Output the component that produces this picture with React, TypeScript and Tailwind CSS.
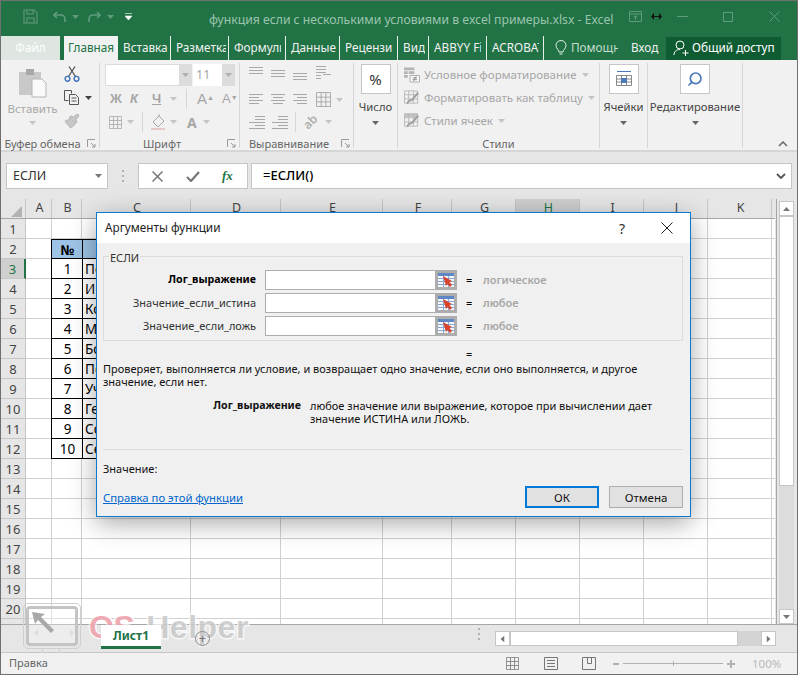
import { Paintbrush, Search } from "lucide-react";

const cols: [string, number][] = [
  ["A", 26], ["B", 30], ["C", 109], ["D", 90], ["E", 102], ["F", 69],
  ["G", 64], ["H", 64], ["I", 64], ["J", 64], ["K", 64],
];
const names = ["", "", "По", "И", "Ко", "М", "Бо", "По", "Уч", "Ге", "Со", "Се"];
const rows = Array.from({ length: 21 }, (_, i) => i + 1);

function Caret({ className = "" }: { className?: string }) {
  return (
    <svg width="7" height="4" viewBox="0 0 7 4" className={className}>
      <path d="M0 0h7L3.5 4z" fill="currentColor" />
    </svg>
  );
}

// horizontal strokes of the alignment buttons
function Lines({ segs, w = 15, h = 15 }: { segs: [number, number, number][]; w?: number; h?: number }) {
  return (
    <svg width={w} height={h} viewBox={`0 0 ${w} ${h}`} className="text-[#a8a8a8]">
      {segs.map(([a, b, y], i) => (
        <path key={i} d={`M${a} ${y + 0.5}H${b}`} stroke="currentColor" />
      ))}
    </svg>
  );
}

function Launcher() {
  return (
    <svg width="9" height="9" viewBox="0 0 9 9" className="absolute right-[3px] bottom-0 text-[#9a9a9a]">
      <path d="M0.5 8V0.5H8M4 4l4 4M8 5v3H5" stroke="currentColor" fill="none" />
    </svg>
  );
}

function GroupLabel({ children, launcher }: { children: string; launcher?: boolean }) {
  return <div className={`absolute bottom-[-5px] left-0 right-0 h-[17px] whitespace-nowrap text-center text-[11px] leading-[15px] text-[#666] ${launcher ? "pr-[15px]" : ""}`}>{children}</div>;
}

function CollapsedGroup({ label, width, icon }: { label: string; width: number; icon: React.ReactNode }) {
  return (
    <div style={{ width }} className="flex h-[85px] shrink-0 flex-col items-center border-r border-[#d6d6d6] pt-px">
      <div className="flex h-[30px] w-[30px] shrink-0 items-center justify-center border border-[#c6c6c6] bg-white">{icon}</div>
      <div className="mt-[4px] whitespace-nowrap text-[11.25px] leading-[17px] text-[#444]">{label}</div>
      <Caret className="mt-[6px] text-[#666]" />
    </div>
  );
}

function TabSep() {
  return <div className="h-[24px] w-px shrink-0 bg-[#e8f0eb]" />;
}

function Tab({ label, width, pr = "pr-[2px]" }: { label: string; width: number; pr?: string }) {
  return (
    <>
      <div style={{ width }} className={`flex h-[24px] shrink-0 items-center pl-[5px] text-[11.75px] text-[#f1f1f1] ${pr}`}>
        <div className="overflow-hidden whitespace-nowrap">{label}</div>
      </div>
      <TabSep />
    </>
  );
}

function StyleRow({ label, icon }: { label: string; icon: React.ReactNode }) {
  return (
    <div className="flex h-[23px] items-center gap-[4px] whitespace-nowrap text-[11.5px] text-[#a6a6a6]">
      <span className="flex w-[16px] justify-center">{icon}</span>
      <span>{label}</span>
      <Caret className="ml-[1px] text-[#c4c4c4]" />
    </div>
  );
}

function GridIcon({ size = 16, stroke = "#a8a8a8" }: { size?: number; stroke?: string }) {
  return (
    <svg width={size} height={size} viewBox="0 0 16 16" fill="none" stroke={stroke}>
      <path d="M.5.5h15v15H.5zM.5 5.5h15M.5 10.5h15M5.5.5v15M10.5.5v15" />
    </svg>
  );
}

function CondIcon() {
  return (
    <svg width="17" height="16" viewBox="0 0 17 16" fill="none">
      <path d="M0 0h11v3H0zM0 4h4v3H0zM5 4h6v3H5zM0 8h4v3H0z" fill="#b4b4b4" />
      <path d="M6.500 8.500h10v7h-10z" fill="#fff" stroke="#a8a8a8" />
      <path d="M9 11h5M9 13h5M10 14.500l3-5" stroke="#8a8a8a" />
    </svg>
  );
}

function BrushGridIcon({ head }: { head?: boolean }) {
  return (
    <svg width="17" height="16" viewBox="0 0 17 16" fill="none">
      {head && <path d="M0 0h15v4H0z" fill="#c4c4c4" />}
      <path d="M.5.5h14v13H.5zM.5 4.500h14M.5 9h14M5 .5v13M10 .5v13" stroke="#b8b8b8" />
      <path d="M16 3L9 11l-3 1-3 3c-.5-2 .5-4 2-5l3-1 6-7z" fill="#a0a0a0" />
    </svg>
  );
}

function RefButton() {
  return (
    <div className="flex h-full w-[22px] shrink-0 items-center justify-center border-[3px] border-[#adadad] bg-[#e4e4e4]">
      <svg width="16" height="14" viewBox="0 0 16 14">
        <path d="M0 0h16v14H0z" fill="#f4f7fb" />
        <path d="M0 0h16v3H0z" fill="#5f87c6" />
        <path d="M0 5.500h16M0 8.500h16M0 11.500h16M5.500 3v11M10.500 3v11" stroke="#8aa7d4" strokeWidth="1" />
        <path d="M5 3l9 5-2.500 1L14 12l-2 2-2.500-3L8 13z" fill="#d8432b" />
      </svg>
    </div>
  );
}

function ArgRow({ label, type, bold, mt = "" }: { label: string; type: string; bold?: boolean; mt?: string }) {
  return (
    <div className={`flex h-[20px] items-center ${mt}`}>
      <div className={`w-[143px] shrink-0 whitespace-nowrap pb-[2px] text-right ${bold ? "text-[10.65px] font-bold text-black" : "text-[11px] text-[#333]"}`}>{label}</div>
      <div className="ml-[9px] flex h-full w-[192px] shrink-0">
        <div className="h-full flex-1 border border-r-0 border-[#adadad] bg-white" />
        <RefButton />
      </div>
      <div className="ml-[9px] w-[17px] shrink-0 pb-[2px] text-[11px] text-black">=</div>
      <div className="pb-[2px] text-[11px] font-semibold text-[#a6a6a6]">{type}</div>
    </div>
  );
}

function Dialog() {
  return (
    <div className="absolute left-[95px] top-[211px] z-10 flex h-[305px] w-[595px] flex-col border border-[#0a7ad1] bg-[#f0f0f0] shadow-[0_6px_24px_rgba(0,0,0,0.35)]">
      <div className="flex h-[30px] shrink-0 items-center bg-white pl-[8px] text-[11.75px] text-[#222]">
        <span>Аргументы функции</span>
        <span className="ml-auto mr-[36px] text-[14px] text-[#333]">?</span>
        <svg width="12" height="12" viewBox="0 0 12 12" className="mr-[17px]">
          <path d="M.5.5l11 11M11.500.5l-11 11" stroke="#222" fill="none" />
        </svg>
      </div>
      <div className="flex flex-1 flex-col pl-[6px] pr-[7px] text-[11px] leading-[13px] text-[#111]">
        <div className="relative mt-[13px] h-[85px] shrink-0 border border-[#dcdcdc] pl-[9px] pt-[13px]">
          <span className="absolute left-[5px] top-[-6px] bg-[#f0f0f0] px-[1px] text-[#333]">ЕСЛИ</span>
          <ArgRow label="Лог_выражение" type="логическое" bold />
          <ArgRow label="Значение_если_истина" type="любое" mt="mt-[3px]" />
          <ArgRow label="Значение_если_ложь" type="любое" mt="mt-[3px]" />
        </div>
        <div className="mt-[6px] pl-[363px] leading-[13px]">=</div>
        <p className="mt-[2px] w-[560px]">Проверяет, выполняется ли условие, и возвращает одно значение, если оно выполняется, и другое значение, если нет.</p>
        <div className="mt-[11px] flex">
          <div className="w-[198px] shrink-0 text-right text-[10.65px] font-bold">Лог_выражение</div>
          <p className="ml-[9px] w-[365px]">любое значение или выражение, которое при вычислении дает значение ИСТИНА или ЛОЖЬ.</p>
        </div>
        <div className="mt-[24px] h-px shrink-0 bg-[#dcdcdc]" />
        <div className="mt-[12px]">Значение:</div>
        <div className="mt-[11px] flex items-start justify-between">
          <span className="mt-[5px] text-[11.3px] text-[#0066cc] underline">Справка по этой функции</span>
          <div className="flex gap-[10px] text-[11.5px]">
            <div className="flex h-[22px] w-[74px] items-center justify-center border-2 border-[#0078d7] bg-[#e1e1e1]">ОК</div>
            <div className="flex h-[22px] w-[74px] items-center justify-center border border-[#adadad] bg-[#e1e1e1]">Отмена</div>
          </div>
        </div>
      </div>
    </div>
  );
}

function Sheet() {
  return (
    <div className="flex h-[429px] shrink-0 overflow-hidden bg-[#e6e6e6] pt-[4px]">
      <div className="w-[774px] shrink-0 overflow-hidden">
        <div className="flex h-[20px] border-b border-[#a6a6a6]">
          <div className="flex w-[25px] shrink-0 items-end justify-end border-r border-[#c6c6c6] pb-[1px] pr-[3px]">
            <svg width="11" height="11" viewBox="0 0 11 11"><path d="M11 0v11H0z" fill="#b2b2b2" /></svg>
          </div>
          {cols.map(([c, w]) => (
            <div key={c} style={{ width: w }} className={`flex shrink-0 items-center justify-center border-r border-[#c6c6c6] pl-[2px] text-[12.5px] ${c === "H" ? "bg-[#cfcfcf] text-[#217346]" : "text-[#444]"}`}>{c}</div>
          ))}
        </div>
        {rows.map((r) => (
          <div key={r} className="flex h-[20px]">
            <div className={`flex w-[25px] shrink-0 items-center justify-center border-b border-r border-[#c6c6c6] pt-[2px] text-[13px] ${r === 3 ? "border-r-2 border-r-[#217346] bg-[#cfcfcf] text-[#217346]" : "text-[#444]"}`}>{r}</div>
            {cols.map(([c, w]) => {
              const inTable = r >= 2 && r <= 12;
              if (inTable && c === "B") {
                return (
                  <div key={c} style={{ width: w + 1 }} className={`ml-[-1px] flex shrink-0 items-center justify-center border-b border-l border-black pl-[1px] pt-[2px] text-[13.5px] text-black ${r === 2 ? "border-t bg-[#9dc3e6] font-bold" : "bg-white"}`}>
                    {r === 2 ? "№" : r - 2}
                  </div>
                );
              }
              if (inTable && c === "C") {
                return (
                  <div key={c} style={{ width: w }} className={`flex shrink-0 items-center overflow-hidden whitespace-nowrap border-b border-l border-r border-black pl-[2px] pt-[2px] text-[13.5px] text-black ${r === 2 ? "border-t bg-[#9dc3e6]" : "bg-white"}`}>{names[r - 1]}</div>
                );
              }
              return <div key={c} style={{ width: w }} className="shrink-0 border-b border-r border-[#d0d0d0] bg-white" />;
            })}
            <div className="flex-1 border-b border-[#d0d0d0] bg-white" />
          </div>
        ))}
      </div>
      <div className="ml-[1px] w-px shrink-0 bg-[#a6a6a6]" />
      <div className="ml-[2px] flex w-[15px] shrink-0 flex-col pt-[2px]">
        <div className="flex h-[15px] shrink-0 items-center justify-center border border-[#c6c6c6] bg-white text-[#777]">
          <Caret className="rotate-180" />
        </div>
        <div className="h-[270px] shrink-0 border border-[#c6c6c6] bg-white" />
        <div className="flex-1 bg-[#dcdcdc]" />
        <div className="flex h-[15px] shrink-0 items-center justify-center border border-[#c6c6c6] bg-white text-[#777]">
          <Caret />
        </div>
      </div>
    </div>
  );
}

function Watermark() {
  return (
    <div className="pointer-events-none absolute left-[22px] top-[602px] z-20 flex items-start">
      <div className="relative h-[46px] w-[58px] rounded-[5px] border border-[#cfcfcf] p-[2px]">
        <div className="relative h-full w-full rounded-[4px] border-[3px] border-[#c4c4c4] bg-white/30">
          <svg width="32" height="26" viewBox="0 0 32 26" className="absolute left-0 top-0">
            <path d="M3 3l13 2-4 3 13 13-3 3L9 11l-3 4z" fill="#a8a8a8" />
          </svg>
          <svg width="40" height="8" viewBox="0 0 40 8" className="absolute bottom-[6px] left-[5px]">
            <path d="M4 0v8L0 4zM36 0v8l4-4z" fill="#dedede" />
          </svg>
        </div>
        <div className="absolute bottom-[-5px] left-[18px] h-[5px] w-[18px] rounded-t-[2px] border border-b-0 border-[#cfcfcf]" />
      </div>
      <span className="ml-[8px] mt-[8px] font-['Liberation_Sans',sans-serif] text-[32px] font-bold leading-[32px] tracking-[-0.5px] text-[#eda0aa]/90 [-webkit-text-stroke:3px_rgba(255,255,255,0.7)] [paint-order:stroke]">OS</span>
      <span className="ml-[12px] mt-[8px] font-['Liberation_Sans',sans-serif] text-[32px] font-bold leading-[32px] tracking-[0.5px] text-[#c4c4c4]/80 [-webkit-text-stroke:3px_rgba(255,255,255,0.7)] [paint-order:stroke]">Helper</span>
    </div>
  );
}

export default function App() {
  return (
    <div className="relative flex h-[675px] w-[798px] flex-col overflow-hidden border border-[#707070] bg-[#f1f1f1] font-['Noto_Sans',sans-serif]">
      {/* title bar */}
      <div className="flex h-[35px] shrink-0 items-center bg-[#217346] pb-[4px] text-[#5f9c7d]">
        <svg width="15" height="15" viewBox="0 0 15 15" className="ml-[22px]" fill="none" stroke="#4f8f6e" strokeWidth="1.500">
          <path d="M1 1h10l3 3v10H1zM4 1v4h6V1M4 14V9h7v5" />
        </svg>
        <svg width="14" height="12" viewBox="0 0 14 12" className="ml-[15px]" fill="none" stroke="#5f9c7d" strokeWidth="1.600">
          <path d="M4 1L1 4l3 3M1 4h7a4 4 0 0 1 4 4v3" />
        </svg>
        <Caret className="ml-[5px]" />
        <svg width="14" height="12" viewBox="0 0 14 12" className="ml-[8px]" fill="none" stroke="#5f9c7d" strokeWidth="1.600">
          <path d="M10 1l3 3-3 3M13 4H6a4 4 0 0 0-4 4v3" />
        </svg>
        <Caret className="ml-[6px]" />
        <svg width="7" height="7" viewBox="0 0 7 7" className="ml-[11px] text-white">
          <path d="M0 .5h7M0 3h7L3.500 7z" stroke="currentColor" strokeWidth=".6" fill="currentColor" />
        </svg>
        <div className="ml-[77px] w-[413px] whitespace-nowrap pt-[7px] text-[12.2px] text-[#9cc4ad]">функция если с несколькими условиями в excel примеры.xlsx - Excel</div>
        <svg width="13" height="11" viewBox="0 0 13 11" className="ml-[7px]" fill="none" stroke="#5f9c7d">
          <path d="M.5.500h12v10H.5zM.5 3h12M6.500 9V5M4.500 6.500l2-2 2 2" />
        </svg>
        <svg width="11" height="7" viewBox="0 0 11 7" className="ml-[9px]">
          <path d="M3 0v7L0 3.500zM8 0v7l3-3.500zM3 3h5v1H3z" fill="#111" />
        </svg>
        <div className="ml-[15px] h-px w-[11px] bg-[#5f9c7d]" />
        <div className="ml-[35px] h-[10px] w-[10px] border border-[#5f9c7d]" />
        <svg width="11" height="11" viewBox="0 0 11 11" className="ml-[36px]" fill="none" stroke="#5f9c7d">
          <path d="M.5.500l10 10M10.500.500l-10 10" />
        </svg>
      </div>
      {/* tabs */}
      <div className="flex h-[24px] shrink-0 items-center bg-[#217346]">
        <div className="flex h-[24px] w-[59px] shrink-0 items-center justify-center bg-[#dfe6e1] text-[11.75px] text-white">Файл</div>
        <div className="ml-[4px] flex h-[24px] w-[54px] shrink-0 items-center justify-center bg-[#f1f1f1] text-[11.75px] text-[#217346]">Главная</div>
        <Tab label="Вставка" width={52} />
        <Tab label="Разметка" width={57} />
        <Tab label="Формулы" width={56} pr="pr-[4px]" />
        <Tab label="Данные" width={53} />
        <Tab label="Рецензирование" width={57} pr="pr-[4px]" />
        <Tab label="Вид" width={30} />
        <Tab label="ABBYY FineReader" width={57} pr="pr-[5px]" />
        <Tab label="ACROBAT" width={56} pr="pr-[4px]" />
        <svg width="12" height="16" viewBox="0 0 12 16" className="ml-[11px] shrink-0" fill="none" stroke="#e8f0eb">
          <path d="M4 12c0-2-3-3.500-3-6.500a5 5 0 0 1 10 0C11 8.500 8 10 8 12zM4.500 14h3" />
        </svg>
        <div className="ml-[4px] w-[47px] shrink-0 overflow-hidden whitespace-nowrap text-[11.75px] text-[#c5dccd]">Помощник</div>
        <div className="ml-[13px] w-[25px] shrink-0 whitespace-nowrap text-[11.75px] text-[#f1f1f1]">Вход</div>
        <div className="ml-[10px] flex h-[23px] w-[115px] shrink-0 items-center gap-[3px] whitespace-nowrap bg-[#0f5c33] pl-[7px] text-[11.75px] text-white">
          <svg width="16" height="16" viewBox="0 0 16 16" fill="none" stroke="#fff">
            <circle cx="7" cy="5" r="4" />
            <path d="M1 15c0-3 2-5.500 6-5.500M9.500 13h6M12.500 10v6" />
          </svg>
          Общий доступ
        </div>
      </div>
      {/* ribbon */}
      <div className="flex h-[92px] shrink-0 items-start border-b-2 border-[#d6d6d6] bg-[#f1f1f1] pt-[3px]">
        <div className="relative h-[85px] w-[99px] shrink-0 border-r border-[#d6d6d6]">
          <div className="flex h-[67px]">
            <div className="flex w-[63px] flex-col items-center pt-[5px] text-[#a6a6a6]">
              <svg width="30" height="30" viewBox="0 0 30 30">
                <path d="M1 4h22v23H1z" fill="#c9c9c9" />
                <path d="M8 1h8v6H8z" fill="#a8a8a8" />
                <path d="M14 11h10l4 4v14H14z" fill="#fafafa" stroke="#b4b4b4" />
              </svg>
              <div className="mt-[2px] text-[11.5px] leading-[17px]">Вставить</div>
              <Caret className="mt-[4px] text-[#c4c4c4]" />
            </div>
            <div className="flex flex-col items-start gap-[8px] pt-[3px]">
              <svg width="16" height="16" viewBox="0 0 16 16" fill="none">
                <path d="M4.500 10.500L11 .5M11.500 10.500L5 .5" stroke="#555" strokeWidth="1.300" />
                <circle cx="3.500" cy="12.800" r="2.400" stroke="#3f74b8" strokeWidth="1.400" />
                <circle cx="12.500" cy="12.800" r="2.400" stroke="#3f74b8" strokeWidth="1.400" />
              </svg>
              <div className="flex items-center gap-[5px]">
                <svg width="16" height="15" viewBox="0 0 16 15" fill="none" stroke="#555">
                  <path d="M.5.500h7v3M.5.500v10h4M5.500 4.500h6l3 3v7h-9zM7.500 8h5M7.500 11h5" />
                </svg>
                <Caret className="text-[#444]" />
              </div>
              <Paintbrush size={16} className="text-[#bdbdbd]" fill="#c8c8c8" />
            </div>
          </div>
          <GroupLabel launcher>Буфер обмена</GroupLabel>
          <Launcher />
        </div>
        <div className="relative h-[85px] w-[140px] shrink-0 border-r border-[#d6d6d6] pl-[5px] pt-[1px] text-[#a6a6a6]">
          <div className="flex h-[22px]">
            <div className="flex w-[87px] items-center justify-end border border-r-0 border-[#dcdcdc] bg-white">
              <div className="flex h-full w-[13px] items-center justify-center bg-[#dcdcdc]"><Caret className="text-[#b0b0b0]" /></div>
            </div>
            <div className="ml-px flex w-[42px] items-center justify-between bg-white pl-[3px] text-[12.5px]">
              11
              <div className="flex h-full w-[13px] items-center justify-center bg-[#dcdcdc]"><Caret className="text-[#b0b0b0]" /></div>
            </div>
          </div>
          <div className="mt-[3px] flex h-[20px] items-center font-['Liberation_Sans',sans-serif] text-[13px] font-bold">
            <span className="ml-[5px] w-[20px]">Ж</span>
            <span className="w-[20px] italic">К</span>
            <span className="ml-[2px] w-[16px] underline">Ч</span>
            <Caret className="ml-[2px] text-[#c4c4c4]" />
            <div className="ml-[9px] h-[20px] w-px bg-[#d6d6d6]" />
            <span className="ml-[10px] w-[25px] text-[15px] font-normal">A<sup className="text-[7px]">▲</sup></span>
            <span className="text-[13px] font-normal">A<sup className="text-[7px]">▼</sup></span>
          </div>
          <div className="mt-[3px] flex h-[20px] items-center">
            <span className="ml-[4px]"><GridIcon size={13} /></span>
            <Caret className="ml-[5px] text-[#c4c4c4]" />
            <div className="ml-[8px] h-[20px] w-px bg-[#d6d6d6]" />
            <svg width="16" height="16" viewBox="0 0 16 16" className="ml-[8px]" fill="none" stroke="#a8a8a8">
              <path d="M2 8l6-6 5 5-6 6zM8 2V0" />
              <path d="M0 14h14v2H0z" fill="#e6c8c8" stroke="none" />
            </svg>
            <Caret className="ml-[3px] text-[#c4c4c4]" />
            <span className="ml-[10px] text-[14px] font-bold">A</span>
            <Caret className="ml-[6px] text-[#c4c4c4]" />
          </div>
          <GroupLabel launcher>Шрифт</GroupLabel>
          <Launcher />
        </div>
        <div className="relative h-[85px] w-[114px] shrink-0 border-r border-[#d6d6d6] pl-[9px] pt-[2px]">
          <div className="flex h-[23px] items-start gap-[7px]">
            <Lines segs={[[0, 14, 2], [0, 14, 5], [0, 14, 8]]} />
            <Lines segs={[[0, 14, 5], [0, 14, 8], [0, 14, 11]]} />
            <Lines segs={[[0, 14, 8], [0, 14, 11], [0, 14, 14]]} />
            <Lines w={18} h={16} segs={[[1, 11, 1], [1, 11, 4], [1, 11, 7], [1, 6, 10], [1, 6, 13], [8, 16, 9]]} />
          </div>
          <div className="flex h-[23px] items-center gap-[7px]">
            <Lines segs={[[0, 14, 2], [0, 10, 5], [0, 14, 8], [0, 10, 11]]} />
            <Lines segs={[[0, 14, 2], [2, 12, 5], [0, 14, 8], [2, 12, 11]]} />
            <Lines segs={[[0, 14, 2], [4, 14, 5], [0, 14, 8], [4, 14, 11]]} />
            <span className="ml-[1px]"><GridIcon size={15} /></span>
            <Caret className="ml-[-2px] text-[#c4c4c4]" />
          </div>
          <div className="flex h-[22px] items-center gap-[7px]">
            <Lines w={16} segs={[[6, 16, 1], [6, 16, 4], [0, 16, 7], [6, 16, 10], [0, 16, 13]]} />
            <Lines w={16} segs={[[6, 16, 1], [6, 16, 4], [0, 16, 7], [6, 16, 10], [0, 16, 13]]} />
            <div className="h-[20px] w-px bg-[#d6d6d6]" />
            <span className="-rotate-45 text-[12px] font-semibold text-[#b0b0b0]">ab</span>
            <Caret className="text-[#c4c4c4]" />
          </div>
          <GroupLabel launcher>Выравнивание</GroupLabel>
          <Launcher />
        </div>
        <CollapsedGroup label="Число" width={44} icon={<span className="text-[15px] text-[#333]">%</span>} />
        <div className="relative h-[85px] w-[202px] shrink-0 border-r border-[#d6d6d6] pl-[6px]">
          <StyleRow label="Условное форматирование" icon={<CondIcon />} />
          <StyleRow label="Форматировать как таблицу" icon={<BrushGridIcon />} />
          <StyleRow label="Стили ячеек" icon={<BrushGridIcon head />} />
          <GroupLabel>Стили</GroupLabel>
        </div>
        <CollapsedGroup
          label="Ячейки"
          width={48}
          icon={
            <svg width="16" height="17" viewBox="0 0 16 17" fill="none">
              <path d="M1 .5h14" stroke="#4a78b8" />
              <path d="M.5 4.500h15v10H.5zM.5 8h15M.5 11h15M5.500 4.500v10M10.500 4.500v10" stroke="#888" />
              <path d="M5 7h6v5H5z" fill="#4a78b8" />
            </svg>
          }
        />
        <CollapsedGroup label="Редактирование" width={95} icon={<Search size={16} strokeWidth={2.500} className="-scale-x-100 text-[#4a78b8]" />} />
        <div className="flex h-[85px] flex-1 items-end justify-end pb-[1px] pr-[9px]">
          <svg width="10" height="6" viewBox="0 0 10 6" fill="none" stroke="#666" strokeWidth="1.500">
            <path d="M1 5l4-4 4 4" />
          </svg>
        </div>
      </div>
      {/* formula bar */}
      <div className="flex h-[43px] shrink-0 items-start bg-[#e6e6e6] pl-[5px] pt-[11px]">
        <div className="flex h-[26px] w-[102px] items-center justify-between border border-[#c6c6c6] bg-white pl-[6px] pr-[5px] text-[12.5px] text-[#333]">
          ЕСЛИ
          <Caret className="text-[#777]" />
        </div>
        <div className="ml-[14px] flex h-[26px] flex-col items-center justify-center gap-[3px]">
          <div className="h-[2px] w-[2px] bg-[#b0b0b0]" />
          <div className="h-[2px] w-[2px] bg-[#b0b0b0]" />
          <div className="h-[2px] w-[2px] bg-[#b0b0b0]" />
        </div>
        <div className="ml-[14px] flex h-[26px] w-[110px] items-center border border-[#c6c6c6] bg-white text-[#777]">
          <svg width="11" height="11" viewBox="0 0 11 11" className="ml-[13px]" fill="none" stroke="currentColor" strokeWidth="1.500">
            <path d="M.5.500l10 10M10.500.500l-10 10" />
          </svg>
          <svg width="14" height="11" viewBox="0 0 14 11" className="ml-[23px]" fill="none" stroke="currentColor" strokeWidth="2.200">
            <path d="M1 6l4 4 8-9" />
          </svg>
          <span className="ml-[22px] font-['Liberation_Serif',serif] text-[13px] font-bold italic text-[#217346]">fx</span>
        </div>
        <div className="ml-[3px] flex h-[26px] w-[541px] items-center justify-between border border-[#c6c6c6] bg-white pl-[11px] pr-[5px] text-[13px] font-medium text-black">
          =ЕСЛИ()
          <svg width="10" height="6" viewBox="0 0 10 6" fill="none" stroke="#555" strokeWidth="1.800">
            <path d="M1 1l4 4 4-4" />
          </svg>
        </div>
      </div>
      <Sheet />
      {/* sheet tabs */}
      <div className="flex h-[28px] shrink-0 items-start border-t border-[#a6a6a6] bg-[#e6e6e6]">
        <div className="relative z-30 ml-[100px] flex h-[24px] w-[60px] items-center justify-center border-b-[3px] border-[#217346] bg-white text-[12px] font-bold text-[#217346]">Лист1</div>
        <div className="relative z-30 ml-[34px] mt-[6px] flex h-[15px] w-[15px] items-center justify-center rounded-full border border-[#8a8a8a] text-[13px] leading-none text-[#777]">+</div>
        <div className="ml-[268px] mt-[3px] flex flex-col gap-[3px]">
          <div className="h-[2px] w-[2px] bg-[#b0b0b0]" />
          <div className="h-[2px] w-[2px] bg-[#b0b0b0]" />
          <div className="h-[2px] w-[2px] bg-[#b0b0b0]" />
        </div>
        <div className="ml-[15px] mt-[6px] flex h-[15px] w-[281px] bg-[#d4d4d4]">
          <div className="flex w-[15px] items-center justify-center border border-[#c6c6c6] bg-white text-[#777]"><Caret className="rotate-90" /></div>
          <div className="w-[228px] border border-[#c6c6c6] bg-white" />
          <div className="flex-1" />
          <div className="flex w-[15px] items-center justify-center border border-[#c6c6c6] bg-white text-[#777]"><Caret className="-rotate-90" /></div>
        </div>
      </div>
      {/* status bar */}
      <div className="flex flex-1 items-center border-t border-[#c6c6c6] bg-[#f1f1f1] text-[11px] text-[#666]">
        <span className="ml-[8px] w-[38px] shrink-0">Правка</span>
        <span className="ml-[459px]"><GridIcon size={13} stroke="#777" /></span>
        <svg width="14" height="13" viewBox="0 0 14 13" className="ml-[25px]" fill="none" stroke="#777">
          <path d="M.5.500h13v12H.5zM3 3.500h8M3 6.500h8M3 9.500h8" />
        </svg>
        <svg width="14" height="13" viewBox="0 0 14 13" className="ml-[24px]" fill="none" stroke="#777">
          <path d="M.5.500h13v12H.5zM5.500.500v6h4v-6" />
        </svg>
        <div className="ml-[17px] h-[2px] w-[6px] bg-[#b0b0b0]" />
        <div className="relative ml-[4px] h-px w-[100px] bg-[#b0b0b0]">
          <div className="absolute left-[50px] top-[-2px] h-[5px] w-px bg-[#b0b0b0]" />
        </div>
        <svg width="8" height="8" viewBox="0 0 8 8" className="ml-[4px]" stroke="#b0b0b0" strokeWidth="2">
          <path d="M4 0v8M0 4h8" />
        </svg>
        <div className="ml-[17px] text-[11.5px] text-[#b8b8b8]">100%</div>
      </div>
      <Dialog />
      <Watermark />
    </div>
  );
}
